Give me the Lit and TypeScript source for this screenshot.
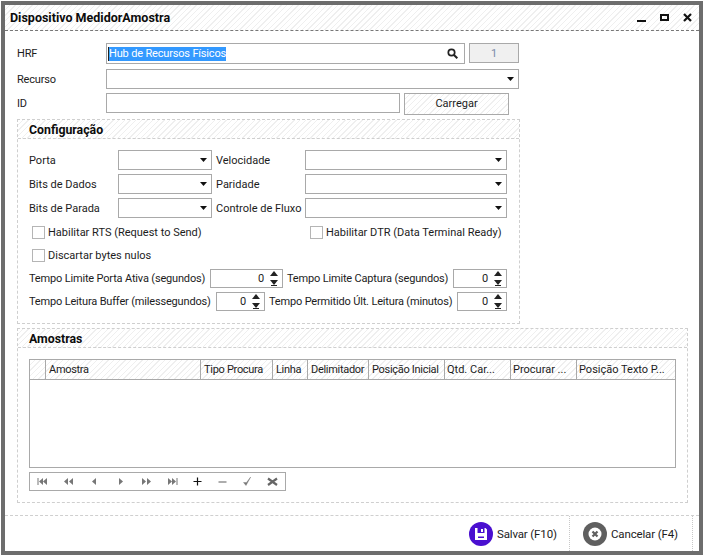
import { LitElement, html, css, svg } from 'lit';
import { customElement } from 'lit/decorators.js';

const arrow = html`<svg class="arrow" width="7" height="4" viewBox="0 0 7 4"><path d="M0 0h7L3.500 4z" fill="#111"/></svg>`;

const spinArrows = html`<svg class="spin-arrows" width="8" height="15" viewBox="0 0 8 15">
  <path d="M4 0L8 5H0z" fill="#222"/><path d="M0 9h8L4 14z" fill="#222"/><path d="M1 14h6v1H1z" fill="#222"/>
</svg>`;

const navIcons = [
  svg`<path d="M2 1v7" stroke="#777" stroke-width="1" fill="none"/><path d="M7 1v7L3 4.500zM11 1v7L7 4.500z" fill="#777"/>`,
  svg`<path d="M6 1v7L2 4.500zM11 1v7L7 4.500z" fill="#777"/>`,
  svg`<path d="M8 1v7L4 4.500z" fill="#777"/>`,
  svg`<path d="M5 1v7L9 4.500z" fill="#777"/>`,
  svg`<path d="M2 1v7L6 4.500zM7 1v7L11 4.500z" fill="#777"/>`,
  svg`<path d="M11 1v7" stroke="#777" stroke-width="1" fill="none"/><path d="M2 1v7L6 4.500zM6 1v7L10 4.500z" fill="#777"/>`,
  svg`<path d="M6.500 .5v8M2.500 4.500h8" stroke="#111" stroke-width="1.200" fill="none"/>`,
  svg`<path d="M2.500 5h8" stroke="#777" stroke-width="1.200" fill="none"/>`,
  svg`<path d="M2.500 5.500L5 8.500L10 -.5L5.500 5.500z" fill="#777" stroke="#777" stroke-width=".4"/>`,
  svg`<path d="M2 1.500L11 8M11 1.500L2 8" stroke="#666" stroke-width="2.200" fill="none"/>`,
];

const columns = ['', 'Amostra', 'Tipo Procura', 'Linha', 'Delimitador', 'Posição Inicial', 'Qtd. Car...', 'Procurar ...', 'Posição Texto P...'];

@customElement('app-root')
export class AppRoot extends LitElement {
  static styles = css`
    :host {
      display: block;
      width: 705px;
      height: 556px;
      padding: 1px 2px 1px 1px;
      box-sizing: border-box;
      background: #fff;
      font-family: Roboto, sans-serif;
      font-size: 11px;
      letter-spacing: -0.17px;
      color: #1c1c1c;
      --hatch: repeating-linear-gradient(135deg, #fff 0 3px, #efefef 3px 4px);
      --line: #a9a9a9;
    }
    * { box-sizing: border-box; }
    .window {
      height: 554px;
      border: 4px solid #6d6d6d;
      display: flex;
      flex-direction: column;
      background: #fff;
    }
    .titlebar {
      height: 26px;
      flex: none;
      display: flex;
      align-items: center;
      padding: 0 7px 0 5px;
      background: var(--hatch);
      border-bottom: 1px dashed #777;
    }
    .title {
      flex: 1;
      font-weight: 700;
      font-size: 12.500px;
      letter-spacing: 0;
      color: #0c0c0c;
    }
    .win-btns { display: flex; gap: 14px; align-items: center; }
    .content { flex: none; padding: 12px 0 0 12px; }
    .row { display: flex; align-items: flex-start; }
    .label-main { width: 89px; height: 20px; line-height: 21px; }
    .field {
      border: 1px solid var(--line);
      height: 20px;
      background: #fff;
      display: flex;
      align-items: center;
      justify-content: flex-end;
      flex: none;
    }
    .hrf { width: 359px; height: 21px; justify-content: space-between; padding: 0 6px 0 1px; }
    .selected {
      background: #3399ff;
      color: #fff;
      line-height: 14px;
      white-space: nowrap;
      border-left: 1px solid #222;
    }
    .count {
      width: 50px;
      margin-left: 4px;
      justify-content: center;
      background: #f0f0f0;
      color: #7a8aa8;
    }
    .recurso { width: 413px; padding-right: 4px; }
    .id { width: 294px; }
    .load {
      width: 105px;
      height: 22px;
      margin-left: 4px;
      border: 1px solid var(--line);
      background: var(--hatch);
      text-align: center;
      line-height: 20px;
      letter-spacing: 0;
    }
    .gap-a { margin-top: 5px; }
    .gap-b { margin-top: 4px; }
    .group {
      border: 1px dashed #cfcfcf;
      flex: none;
    }
    .group-title {
      height: 19px;
      padding-left: 11px;
      font-weight: 700;
      font-size: 12.300px;
      letter-spacing: 0;
      line-height: 20px;
      background: var(--hatch);
      border-bottom: 1px dashed #cfcfcf;
      color: #0c0c0c;
    }
    .config { width: 503px; height: 205px; margin-top: 4px; }
    .config-body { padding: 11px 12px 0 11px; }
    .serial {
      display: grid;
      grid-template-columns: 89px 94px 93px 202px;
      grid-auto-rows: 20px;
      row-gap: 4px;
      letter-spacing: 0;
    }
    .serial span { line-height: 21px; height: 20px; }
    .serial .right { padding-left: 4px; white-space: nowrap; }
    .combo { padding-right: 4px; }
    .checks {
      margin-top: 7px;
      display: grid;
      grid-template-columns: 278px 1fr;
      row-gap: 9px;
      padding-left: 3px;
      letter-spacing: 0;
    }
    .check { display: flex; align-items: center; gap: 3px; height: 14px; white-space: nowrap; }
    .box { width: 13px; height: 13px; border: 1px solid #b5b5b5; background: #fff; flex: none; }
    .spins { margin-top: 7px; display: flex; flex-direction: column; gap: 4px; }
    .spin-row { display: grid; align-items: center; height: 19px; white-space: nowrap; }
    .spin-top { grid-template-columns: 181px 73px 170px 54px; }
    .spin-bottom { grid-template-columns: 187px 49px 192px 50px; }
    .spin-label { padding-left: 4px; }
    .spin {
      display: flex;
      align-items: center;
      justify-content: flex-end;
      border: 1px solid var(--line);
      height: 19px;
      padding-right: 4px;
      gap: 6px;
    }
    .samples { width: 671px; height: 175px; margin-top: 4px; }
    .samples-body { padding: 11px 11px 0 11px; }
    .grid {
      width: 647px;
      height: 109px;
      border: 1px solid var(--line);
    }
    .grid-head {
      display: grid;
      grid-template-columns: 16px 155px 72px 35px 61px 76px 66px 66px 1fr;
      height: 20px;
      background: var(--hatch);
      border-bottom: 1px solid var(--line);
    }
    .grid-head div {
      border-right: 1px solid var(--line);
      padding-left: 3px;
      line-height: 19px;
      letter-spacing: -0.3px;
      white-space: nowrap;
      overflow: hidden;
    }
    .grid-head div:nth-child(n + 7) { letter-spacing: 0; padding-left: 2px; }
    .grid-head div:last-child { border-right: 0; }
    .nav {
      margin-top: 4px;
      width: 257px;
      height: 19px;
      border: 1px solid var(--line);
      display: flex;
      align-items: center;
    }
    .nav-btn { width: 26px; display: flex; justify-content: center; }
    .nav-btn:nth-child(n + 7) { width: 25px; }
    .footer {
      margin-top: 12px;
      flex: 1;
      border-top: 1px dashed #cfcfcf;
      display: flex;
      justify-content: flex-end;
    }
    .action {
      display: flex;
      align-items: center;
      gap: 4px;
      height: 35px;
      white-space: nowrap;
      font-size: 11.500px;
      letter-spacing: -0.15px;
    }
    .save { width: 100px; }
    .cancel {
      width: 124px;
      padding-left: 13px;
      border-left: 1px dotted #c8c8c8;
      border-right: 1px dotted #c8c8c8;
      margin-right: 6px;
    }
  `;

  render() {
    return html`
      <div class="window">
        <div class="titlebar">
          <div class="title">Dispositivo MedidorAmostra</div>
          <div class="win-btns">
            <svg width="9" height="9" viewBox="0 0 9 9"><path d="M0 7h9v2H0z" fill="#111"/></svg>
            <svg width="9" height="9" viewBox="0 0 9 9"><path d="M0 1h9v7H0zM2 3v3h5V3z" fill="#111" fill-rule="evenodd"/></svg>
            <svg width="9" height="9" viewBox="0 0 9 9"><path d="M1 1l7 7M8 1L1 8" stroke="#111" stroke-width="2.200" fill="none"/></svg>
          </div>
        </div>
        <div class="content">
          <div class="row">
            <div class="label-main">HRF</div>
            <div class="field hrf">
              <span class="selected">Hub de Recursos Físicos</span>
              <svg width="11" height="11" viewBox="0 0 11 11"><circle cx="4.500" cy="4.500" r="3.200" fill="none" stroke="#222" stroke-width="1.700"/><path d="M7 7l3.300 3.300" stroke="#222" stroke-width="2"/></svg>
            </div>
            <div class="field count">1</div>
          </div>
          <div class="row gap-a">
            <div class="label-main">Recurso</div>
            <div class="field recurso">${arrow}</div>
          </div>
          <div class="row gap-b">
            <div class="label-main">ID</div>
            <div class="field id"></div>
            <div class="load">Carregar</div>
          </div>

          <div class="group config">
            <div class="group-title">Configuração</div>
            <div class="config-body">
              <div class="serial">
                <span>Porta</span><div class="field combo">${arrow}</div>
                <span class="right">Velocidade</span><div class="field combo">${arrow}</div>
                <span>Bits de Dados</span><div class="field combo">${arrow}</div>
                <span class="right">Paridade</span><div class="field combo">${arrow}</div>
                <span>Bits de Parada</span><div class="field combo">${arrow}</div>
                <span class="right">Controle de Fluxo</span><div class="field combo">${arrow}</div>
              </div>
              <div class="checks">
                <div class="check"><div class="box"></div>Habilitar RTS (Request to Send)</div>
                <div class="check"><div class="box"></div>Habilitar DTR (Data Terminal Ready)</div>
                <div class="check"><div class="box"></div>Discartar bytes nulos</div>
              </div>
              <div class="spins">
                <div class="spin-row spin-top">
                  <span>Tempo Limite Porta Ativa (segundos)</span>
                  <div class="spin">0${spinArrows}</div>
                  <span class="spin-label">Tempo Limite Captura (segundos)</span>
                  <div class="spin">0${spinArrows}</div>
                </div>
                <div class="spin-row spin-bottom">
                  <span>Tempo Leitura Buffer (milessegundos)</span>
                  <div class="spin">0${spinArrows}</div>
                  <span class="spin-label">Tempo Permitido Últ. Leitura (minutos)</span>
                  <div class="spin">0${spinArrows}</div>
                </div>
              </div>
            </div>
          </div>

          <div class="group samples">
            <div class="group-title">Amostras</div>
            <div class="samples-body">
              <div class="grid">
                <div class="grid-head">${columns.map((c) => html`<div>${c}</div>`)}</div>
              </div>
              <div class="nav">
                ${navIcons.map((p) => html`<div class="nav-btn"><svg width="13" height="9" viewBox="0 0 13 9">${p}</svg></div>`)}
              </div>
            </div>
          </div>
        </div>
        <div class="footer">
          <div class="action save">
            <svg width="24" height="24" viewBox="0 0 24 24">
              <circle cx="12" cy="12" r="12" fill="#4a0fd0"/>
              <path d="M6 6h10.500L18 7.500V18H6zM8.500 6v5h7V6zM9 14.500V16h6v-1.500z" fill="#fff" fill-rule="evenodd"/>
              <path d="M12 7h2v3h-2z" fill="#fff"/>
            </svg>
            Salvar (F10)
          </div>
          <div class="action cancel">
            <svg width="24" height="24" viewBox="0 0 24 24">
              <circle cx="12" cy="12" r="12" fill="#5f5f5f"/>
              <circle cx="12" cy="12" r="6.500" fill="#fff"/>
              <path d="M9.500 9.500l5 5M14.500 9.500l-5 5" stroke="#5f5f5f" stroke-width="2.200"/>
            </svg>
            Cancelar (F4)
          </div>
        </div>
      </div>
    `;
  }
}
